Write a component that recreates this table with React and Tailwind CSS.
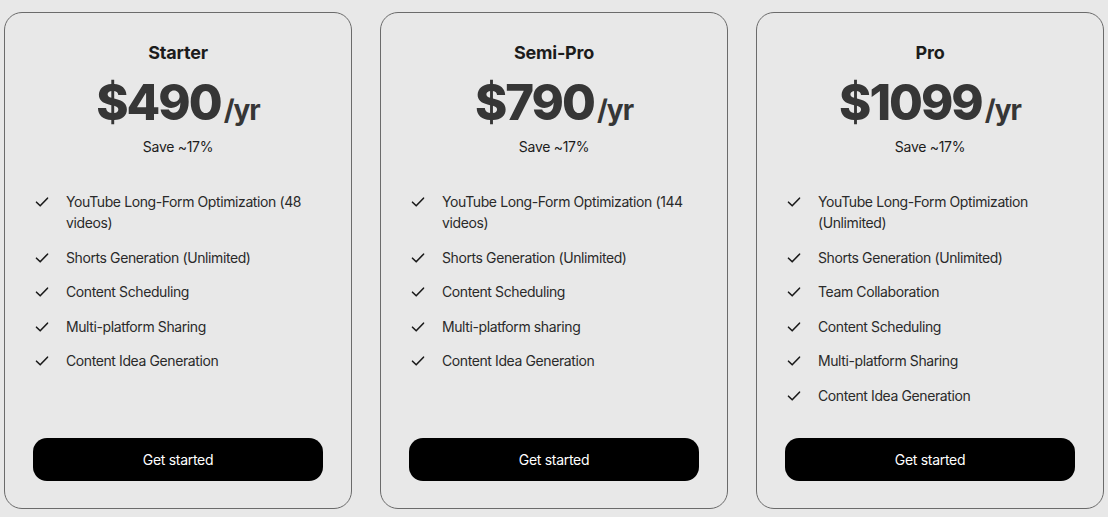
import React from "react";

const plans = [
  {
    name: "Starter",
    price: "$490",
    features: [
      "YouTube Long-Form Optimization (48 videos)",
      "Shorts Generation (Unlimited)",
      "Content Scheduling",
      "Multi-platform Sharing",
      "Content Idea Generation",
    ],
  },
  {
    name: "Semi-Pro",
    price: "$790",
    features: [
      "YouTube Long-Form Optimization (144 videos)",
      "Shorts Generation (Unlimited)",
      "Content Scheduling",
      "Multi-platform sharing",
      "Content Idea Generation",
    ],
  },
  {
    name: "Pro",
    price: "$1099",
    features: [
      "YouTube Long-Form Optimization (Unlimited)",
      "Shorts Generation (Unlimited)",
      "Team Collaboration",
      "Content Scheduling",
      "Multi-platform Sharing",
      "Content Idea Generation",
    ],
  },
];

function Check() {
  return (
    <svg width="14" height="14" viewBox="0 0 14 14" fill="none" className="shrink-0 mt-[4px]">
      <path d="M1.5 7.2 L5.2 10.8 L12.5 3.2" stroke="#1a1a1a" strokeWidth="1.6" strokeLinecap="round" strokeLinejoin="round" />
    </svg>
  );
}

function Card({ plan }) {
  return (
    <div className="w-[348px] h-[497px] shrink-0 rounded-[18px] border border-[#6b6b6b] bg-[#e8e8e8] flex flex-col px-[28px] pt-[27px] pb-[27px]">
      <div className="text-center text-[18px] leading-[26px] font-bold text-[#1c1c1c] tracking-[-0.2px]">{plan.name}</div>
      <div className="mt-[8px] flex items-baseline justify-center text-[#363636]">
        <span className="text-[49px] leading-[58px] font-extrabold tracking-[-2px]">{plan.price}</span>
        <span className="text-[28px] font-bold tracking-[-1px] ml-[3px]">/yr</span>
      </div>
      <div className="mt-[5px] text-center text-[14px] leading-[20px] text-[#1c1c1c] tracking-[-0.3px]">Save ~17%</div>
      <ul className="mt-[34px] flex flex-col gap-[13.5px] pl-[2px]">
        {plan.features.map((f) => (
          <li key={f} className="flex gap-[17px] text-[14px] leading-[21px] text-[#2a2a2a] tracking-[-0.4px]">
            <Check />
            <span>{f}</span>
          </li>
        ))}
      </ul>
      <button className="mt-auto h-[43px] w-full rounded-[14px] bg-black text-white text-[14px] tracking-[-0.3px]">Get started</button>
    </div>
  );
}

export default function App() {
  return (
    <div className="w-[1108px] h-[517px] bg-[#e8e8e8] flex gap-[28px] pl-[4px] pt-[12px]" style={{ fontFamily: "Inter, 'Liberation Sans', sans-serif" }}>
      {plans.map((p) => (
        <Card key={p.name} plan={p} />
      ))}
    </div>
  );
}
